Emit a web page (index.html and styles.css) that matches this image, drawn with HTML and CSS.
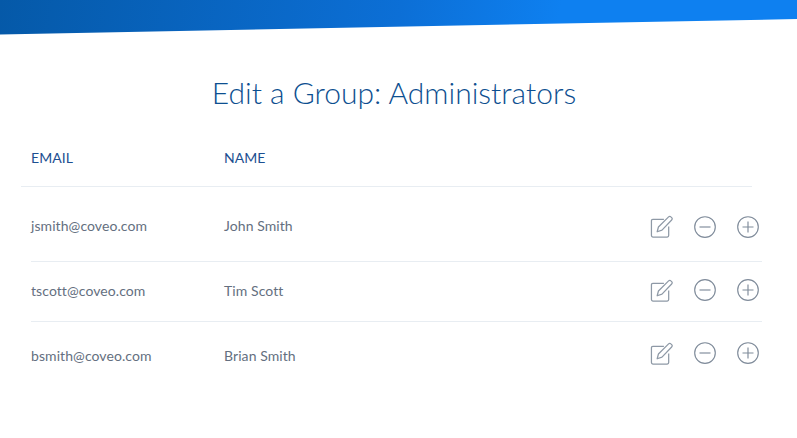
FILE: index.html
```html
<!DOCTYPE html>
<html lang="en">
<head>
<meta charset="utf-8">
<title>Edit a Group</title>
<link rel="stylesheet" href="styles.css">
</head>
<body>
<svg width="0" height="0" class="defs">
  <defs>
    <symbol id="i-edit" viewBox="0 0 24 24">
      <path d="M14.500 4.500H3C2 4.500 1.500 5 1.500 6v15.500c0 1 .5 1.500 1.500 1.500h15c1 0 1.500-.5 1.500-1.500V12" fill="none" stroke="currentColor" stroke-width="1.300"/>
      <path d="M7.500 17.500l1.300-5L19.400 2c.8-.8 1.700-.8 2.400 0l.8.8c.8.8.8 1.700 0 2.400L12.500 15.800z" fill="none" stroke="currentColor" stroke-width="1.300" stroke-linejoin="round"/>
    </symbol>
    <symbol id="i-minus" viewBox="0 0 22 22">
      <circle cx="11" cy="11" r="10.300" fill="none" stroke="currentColor" stroke-width="1.150"/>
      <path d="M5.500 11h11" fill="none" stroke="currentColor" stroke-width="1.150"/>
    </symbol>
    <symbol id="i-plus" viewBox="0 0 22 22">
      <circle cx="11" cy="11" r="10.300" fill="none" stroke="currentColor" stroke-width="1.150"/>
      <path d="M5.500 11h11M11 5.500v11" fill="none" stroke="currentColor" stroke-width="1.150"/>
    </symbol>
  </defs>
</svg>
<header class="banner"></header>
<main class="content">
  <h1 class="title">Edit a Group: Administrators</h1>
  <div class="head">
    <span class="col-email">EMAIL</span>
    <span class="col-name">NAME</span>
  </div>
  <div class="rows">
    <div class="row row-a">
      <span class="col-email">jsmith@coveo.com</span>
      <span class="col-name">John Smith</span>
      <span class="actions">
        <svg class="ic ic-edit"><use href="#i-edit"/></svg>
        <svg class="ic ic-round"><use href="#i-minus"/></svg>
        <svg class="ic ic-round"><use href="#i-plus"/></svg>
      </span>
    </div>
    <div class="row row-b">
      <span class="col-email">tscott@coveo.com</span>
      <span class="col-name">Tim Scott</span>
      <span class="actions">
        <svg class="ic ic-edit"><use href="#i-edit"/></svg>
        <svg class="ic ic-round"><use href="#i-minus"/></svg>
        <svg class="ic ic-round"><use href="#i-plus"/></svg>
      </span>
    </div>
    <div class="row row-c">
      <span class="col-email">bsmith@coveo.com</span>
      <span class="col-name">Brian Smith</span>
      <span class="actions">
        <svg class="ic ic-edit"><use href="#i-edit"/></svg>
        <svg class="ic ic-round"><use href="#i-minus"/></svg>
        <svg class="ic ic-round"><use href="#i-plus"/></svg>
      </span>
    </div>
  </div>
</main>
</body>
</html>
```
FILE: styles.css
```css
* { box-sizing: border-box; }
html, body { margin: 0; padding: 0; }
body {
  background: #fff;
  font-family: Lato, "Liberation Sans", sans-serif;
  width: 797px;
  height: 438px;
  overflow: hidden;
}
.defs { position: absolute; }
.banner {
  height: 35px;
  background: linear-gradient(100deg, #0559a8 0%, #0c6fd6 50%, #0e80f0 70%, #0e80f0 100%);
  clip-path: polygon(0 0, 100% 0, 100% 19px, 0 34.500px);
}
.content { display: flex; flex-direction: column; }
.title {
  margin: 36px 0 0;
  padding: 2px 9px 0 0;
  text-align: center;
  font-size: 30px;
  line-height: 38px;
  font-weight: 300;
  color: #0d4f90;
}
.head {
  margin: 19px 45px 0 21px;
  padding: 0 0 2px 10px;
  height: 57px;
  display: flex;
  align-items: center;
  border-bottom: 1px solid #e8edf2;
  font-size: 14px;
  letter-spacing: 0.05px;
  color: #1d4f91;
}
.col-email { width: 193px; flex: none; }
.col-name { flex: 1; }
.rows { margin: 0 35px 0 31px; display: flex; flex-direction: column; }
.row {
  display: flex;
  align-items: center;
  font-size: 14px;
  letter-spacing: 0.08px;
  color: #646f80;
}
.row-a { height: 75px; border-bottom: 1px solid #e8edf2; padding-top: 3px; }
.row-b { height: 60px; border-bottom: 1px solid #e8edf2; padding-bottom: 2px; }
.row-c { height: 68px; padding-bottom: 2px; }
.actions { display: flex; align-items: center; margin-right: 3px; color: #7f8b9a; }
.row-a .actions { padding-top: 2px; }
.row-b .actions { padding-bottom: 1px; }
.row-c .actions { padding-bottom: 4px; }
.ic { display: block; flex: none; }
.ic-edit { width: 23px; height: 23px; margin-right: 21px; color: #8e99a6; }
.ic-round { width: 22px; height: 22px; }
.ic-round + .ic-round { margin-left: 21px; }
```
